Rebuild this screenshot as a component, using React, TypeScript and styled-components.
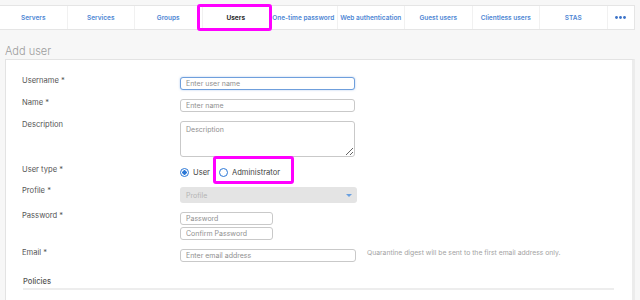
import React from "react";
import styled, { createGlobalStyle } from "styled-components";

const GlobalStyle = createGlobalStyle`
  body {
    margin: 0;
    background: #f7f7f7;
    font-family: Inter, "Noto Sans", sans-serif;
  }
  * {
    box-sizing: border-box;
  }
`;

const Page = styled.div`
  width: 640px;
  height: 300px;
  overflow: hidden;
  padding-top: 5px;
`;

const TabBar = styled.nav`
  display: flex;
  width: 635px;
  height: 25px;
  background: #fff;
  border: 1px solid #e5e5e5;
  border-left: none;
`;

const Tab = styled.div<{ $active?: boolean; $narrow?: boolean }>`
  position: relative;
  flex: ${(p) => (p.$narrow ? "1 1 auto" : "0 0 67.5px")};
  display: flex;
  align-items: center;
  justify-content: center;
  font-size: 6.5px;
  font-weight: ${(p) => (p.$active ? 700 : 600)};
  color: ${(p) => (p.$active ? "#2b2b2b" : "#4e86d4")};
  border-right: ${(p) => (p.$narrow ? "none" : "1px solid #f1f1f1")};
  white-space: nowrap;
`;

const Highlight = styled.span<{ $t: number; $r: number; $b: number; $l: number }>`
  position: absolute;
  top: ${(p) => p.$t}px;
  right: ${(p) => p.$r}px;
  bottom: ${(p) => p.$b}px;
  left: ${(p) => p.$l}px;
  border: 3px solid #ff00ff;
  border-radius: 3px;
  pointer-events: none;
`;

const Heading = styled.h1`
  margin: 14px 0 0 5px;
  padding-bottom: 1px;
  font-size: 11px;
  line-height: 14px;
  font-weight: 300;
  color: #9c9c9c;
`;

const Panel = styled.section`
  margin-left: 5px;
  width: 630px;
  height: 260px;
  background: #fff;
  border: 1px solid #e3e3e3;
  border-right: 3px solid #ececec;
  padding: 17px 18px 0 16px;
`;

const Form = styled.div`
  display: grid;
  grid-template-columns: 158px 1fr;
  row-gap: 9px;
  align-items: start;
`;

const Label = styled.label`
  font-size: 7.6px;
  line-height: 8px;
  color: #555;
`;

const Field = styled.input<{ $w: number; $focused?: boolean }>`
  display: block;
  width: ${(p) => p.$w}px;
  height: 13px;
  padding: 0 5px;
  font-family: inherit;
  font-size: 7px;
  color: #444;
  background: #fff;
  border: 1px solid ${(p) => (p.$focused ? "#6f9fdc" : "#c9c9c9")};
  border-radius: 3px;
  box-shadow: ${(p) => (p.$focused ? "0 0 2px rgba(80,140,220,0.5)" : "none")};
  outline: none;

  &::placeholder {
    color: #8f8f8f;
  }
`;

const Area = styled.textarea`
  display: block;
  width: 175px;
  height: 36px;
  padding: 3px 5px;
  font-family: inherit;
  font-size: 7px;
  border: 1px solid #c9c9c9;
  border-radius: 3px;
  resize: vertical;
  outline: none;

  &::placeholder {
    color: #8f8f8f;
  }
`;

const RadioRow = styled.div`
  display: flex;
  align-items: center;
  gap: 9px;
  height: 12px;
`;

const RadioOption = styled.span`
  position: relative;
  display: flex;
  align-items: center;
  gap: 4px;
  font-size: 7.6px;
  color: #444;
`;

const RadioDot = styled.span<{ $checked?: boolean }>`
  width: 9px;
  height: 9px;
  border-radius: 50%;
  border: 1.3px solid #2c78d6;
  background: ${(p) =>
    p.$checked ? "radial-gradient(circle, #2c78d6 0 2px, #fff 2.4px)" : "#fff"};
`;

const Select = styled.div`
  position: relative;
  width: 177px;
  height: 16px;
  padding-left: 6px;
  display: flex;
  align-items: center;
  font-size: 7px;
  color: #b4b4b4;
  background: #e4e4e4;
  border-radius: 3px;

  &::after {
    content: "";
    position: absolute;
    right: 5px;
    top: 7px;
    border-left: 3px solid transparent;
    border-right: 3px solid transparent;
    border-top: 3px solid #6aa0e0;
  }
`;

const Stack = styled.div`
  display: flex;
  flex-direction: column;
  gap: 2px;
`;

const InlineRow = styled.div`
  display: flex;
  align-items: flex-start;
  gap: 11px;
`;

const Help = styled.span`
  font-size: 6.8px;
  line-height: 8px;
  color: #a3a3a3;
  white-space: nowrap;
`;

const Section = styled.div`
  margin-top: 15px;
  margin-left: 1px;
  width: 591px;
  padding-bottom: 1px;
  border-bottom: 2px solid #ededed;
  font-size: 7.6px;
  line-height: 10px;
  font-weight: 500;
  color: #555;
`;

const tabs = [
  "Servers",
  "Services",
  "Groups",
  "Users",
  "One-time password",
  "Web authentication",
  "Guest users",
  "Clientless users",
  "STAS",
];

const App: React.FC = () => {
  return (
    <Page>
      <GlobalStyle />
      <TabBar>
        {tabs.map((t) => (
          <Tab key={t} $active={t === "Users"}>
            {t}
            {t === "Users" && <Highlight $t={-2} $r={-3} $b={-2} $l={-6} />}
          </Tab>
        ))}
        <Tab $narrow>
          <svg width="11" height="3" viewBox="0 0 11 3">
            <circle cx="1.5" cy="1.5" r="1.4" fill="#3a72c8" />
            <circle cx="5.5" cy="1.5" r="1.4" fill="#3a72c8" />
            <circle cx="9.5" cy="1.5" r="1.4" fill="#3a72c8" />
          </svg>
        </Tab>
      </TabBar>

      <Heading>Add user</Heading>

      <Panel>
        <Form>
          <Label>Username *</Label>
          <Field $w={175} $focused placeholder="Enter user name" />

          <Label>Name *</Label>
          <Field $w={175} placeholder="Enter name" />

          <Label>Description</Label>
          <Area placeholder="Description" />

          <Label>User type *</Label>
          <RadioRow>
            <RadioOption>
              <RadioDot $checked />
              User
            </RadioOption>
            <RadioOption>
              <RadioDot />
              Administrator
              <Highlight $t={-12} $r={-14} $b={-7} $l={-6} />
            </RadioOption>
          </RadioRow>

          <Label>Profile *</Label>
          <Select>Profile</Select>

          <Label>Password *</Label>
          <Stack>
            <Field $w={93} placeholder="Password" />
            <Field $w={93} placeholder="Confirm Password" />
          </Stack>

          <Label>Email *</Label>
          <InlineRow>
            <Field $w={176} placeholder="Enter email address" />
            <Help>Quarantine digest will be sent to the first email address only.</Help>
          </InlineRow>
        </Form>
        <Section>Policies</Section>
      </Panel>
    </Page>
  );
};

export default App;
